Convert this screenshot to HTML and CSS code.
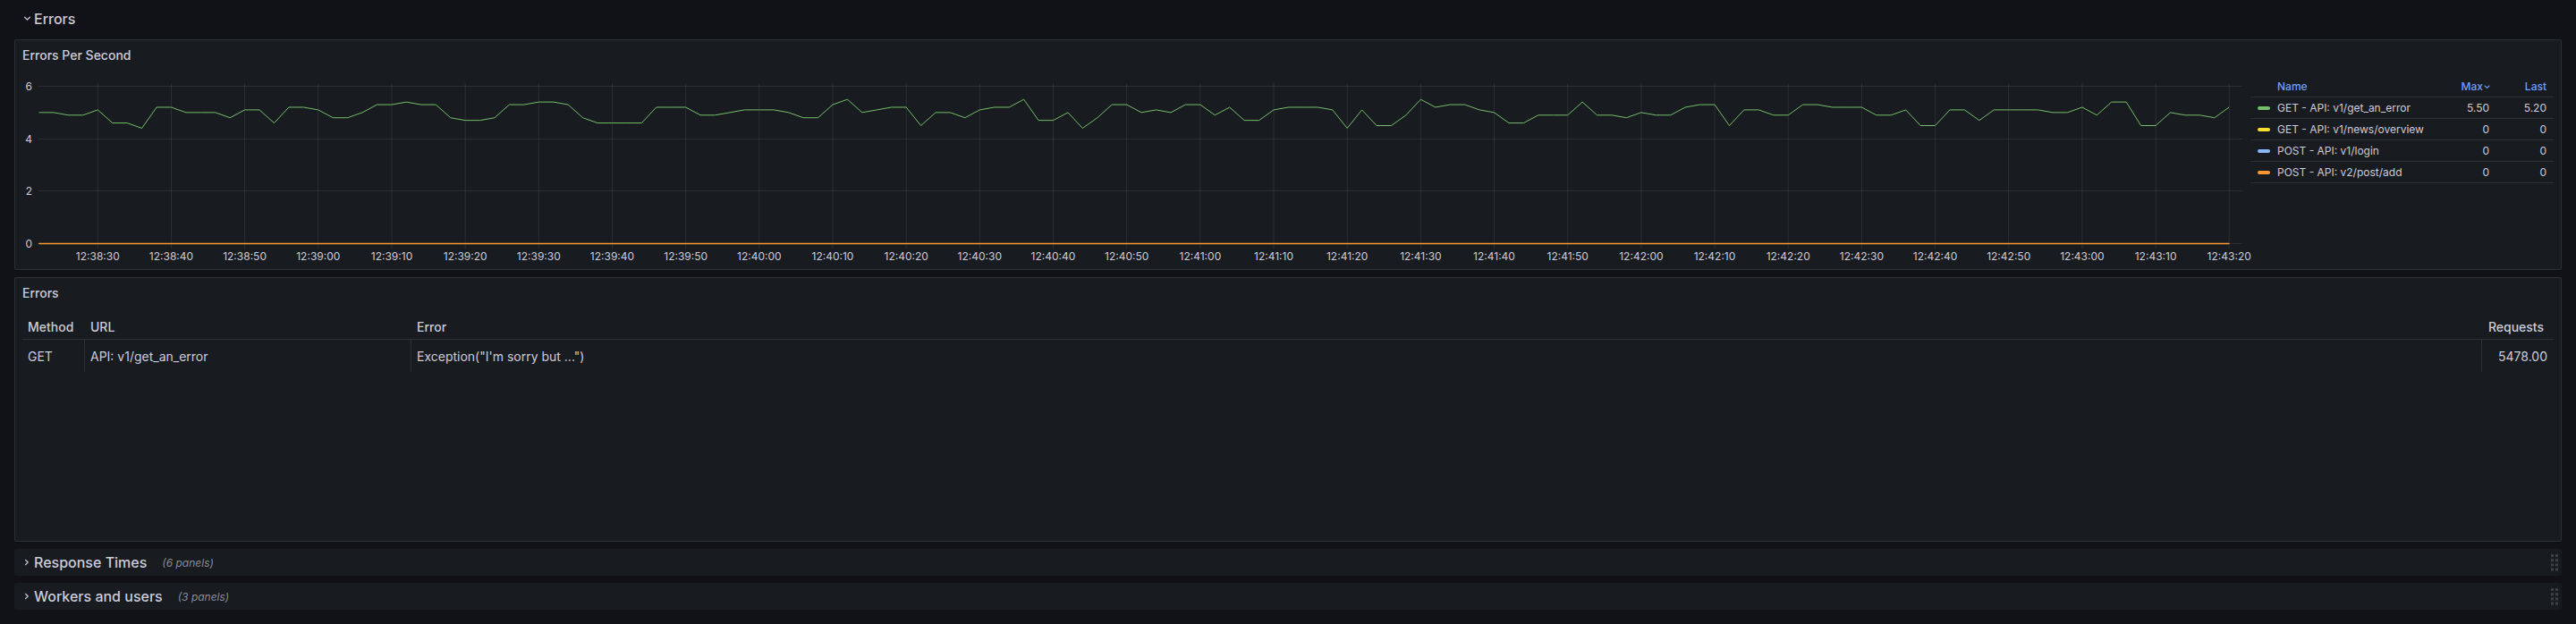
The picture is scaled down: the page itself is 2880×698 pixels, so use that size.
FILE: index.html
```html
<!DOCTYPE html>
<html lang="en">
<head>
<meta charset="utf-8">
<title>Errors</title>
<link rel="stylesheet" href="styles.css">
</head>
<body>
<div class="dashboard">
  <div class="row-header">
    <svg class="chev" width="8" height="8" viewBox="0 0 8 8"><polyline points="0.7,2.3 3.5,5.1 6.3,2.3" fill="none" stroke="#ccccdc" stroke-width="1.3" stroke-linecap="round" stroke-linejoin="round"/></svg>
    <span class="row-title">Errors</span>
  </div>

  <section class="panel panel-ts">
    <header class="panel-header">Errors Per Second</header>
    <div class="panel-body">
      <svg class="chart" height="208" overflow="visible">
        <path class="grid" d="M84.3 8V193M166.5 8V193M248.6 8V193M330.8 8V193M413 8V193M495.2 8V193M577.3 8V193M659.5 8V193M741.7 8V193M823.8 8V193M906 8V193M988.2 8V193M1070.3 8V193M1152.5 8V193M1234.7 8V193M1316.9 8V193M1399 8V193M1481.2 8V193M1563.4 8V193M1645.5 8V193M1727.7 8V193M1809.9 8V193M1892 8V193M1974.2 8V193M2056.4 8V193M2138.6 8V193M2220.7 8V193M2302.9 8V193M2385.1 8V193M2467.2 8V193M17.7 11.5H2482M17.7 70.5H2482M17.7 128.5H2482M17.7 187.5H2482"/>
        <g class="ylab">
          <text x="11" y="15.8">6</text>
          <text x="11" y="74.8">4</text>
          <text x="11" y="132.8">2</text>
          <text x="11" y="191.8">0</text>
        </g>
        <g class="xlab">
          <text x="84.3" y="206">12:38:30</text>
          <text x="166.5" y="206">12:38:40</text>
          <text x="248.6" y="206">12:38:50</text>
          <text x="330.8" y="206">12:39:00</text>
          <text x="413" y="206">12:39:10</text>
          <text x="495.2" y="206">12:39:20</text>
          <text x="577.3" y="206">12:39:30</text>
          <text x="659.5" y="206">12:39:40</text>
          <text x="741.7" y="206">12:39:50</text>
          <text x="823.8" y="206">12:40:00</text>
          <text x="906" y="206">12:40:10</text>
          <text x="988.2" y="206">12:40:20</text>
          <text x="1070.3" y="206">12:40:30</text>
          <text x="1152.5" y="206">12:40:40</text>
          <text x="1234.7" y="206">12:40:50</text>
          <text x="1316.9" y="206">12:41:00</text>
          <text x="1399" y="206">12:41:10</text>
          <text x="1481.2" y="206">12:41:20</text>
          <text x="1563.4" y="206">12:41:30</text>
          <text x="1645.5" y="206">12:41:40</text>
          <text x="1727.7" y="206">12:41:50</text>
          <text x="1809.9" y="206">12:42:00</text>
          <text x="1892" y="206">12:42:10</text>
          <text x="1974.2" y="206">12:42:20</text>
          <text x="2056.4" y="206">12:42:30</text>
          <text x="2138.6" y="206">12:42:40</text>
          <text x="2220.7" y="206">12:42:50</text>
          <text x="2302.9" y="206">12:43:00</text>
          <text x="2385.1" y="206">12:43:10</text>
          <text x="2467.2" y="206">12:43:20</text>
        </g>
        <g transform="translate(18.56 187.5) scale(16.434 -29.33)">
          <polyline class="s-green" points="0,5 1,5 2,4.9 3,4.9 4,5.1 5,4.6 6,4.6 7,4.4 8,5.2 9,5.2 10,5 11,5 12,5 13,4.8 14,5.1 15,5.1 16,4.6 17,5.2 18,5.2 19,5.1 20,4.8 21,4.8 22,5 23,5.3 24,5.3 25,5.4 26,5.3 27,5.3 28,4.8 29,4.7 30,4.7 31,4.8 32,5.3 33,5.3 34,5.4 35,5.4 36,5.3 37,4.8 38,4.6 39,4.6 40,4.6 41,4.6 42,5.2 43,5.2 44,5.2 45,4.9 46,4.9 47,5 48,5.1 49,5.1 50,5.1 51,5 52,4.8 53,4.8 54,5.3 55,5.5 56,5 57,5.1 58,5.2 59,5.2 60,4.5 61,5 62,5 63,4.8 64,5.1 65,5.2 66,5.2 67,5.5 68,4.7 69,4.7 70,5 71,4.4 72,4.8 73,5.3 74,5.3 75,5 76,5.1 77,5 78,5.3 79,5.3 80,4.9 81,5.2 82,4.7 83,4.7 84,5.1 85,5.2 86,5.2 87,5.2 88,5.1 89,4.4 90,5.1 91,4.5 92,4.5 93,4.9 94,5.5 95,5.2 96,5.3 97,5.3 98,5.1 99,5 100,4.6 101,4.6 102,4.9 103,4.9 104,4.9 105,5.4 106,4.9 107,4.9 108,4.8 109,5 110,4.9 111,4.9 112,5.2 113,5.3 114,5.3 115,4.5 116,5.1 117,5.1 118,4.9 119,4.9 120,5.3 121,5.3 122,5.2 123,5.2 124,5.2 125,4.9 126,4.9 127,5.1 128,4.5 129,4.5 130,5.1 131,5.1 132,4.7 133,5.1 134,5.1 135,5.1 136,5.1 137,5 138,5 139,5.2 140,4.9 141,5.4 142,5.4 143,4.5 144,4.5 145,5 146,4.9 147,4.9 148,4.8 149,5.2"/>
          <polyline class="s-yellow" points="0,0 149,0"/>
          <polyline class="s-blue" points="0,0 149,0"/>
          <polyline class="s-orange" points="0,0 149,0"/>
        </g>
      </svg>

      <div class="legend">
        <div class="lg-row lg-head">
          <div class="lg-name">Name</div>
          <div class="lg-num">Max<svg class="sort" width="7" height="6" viewBox="0 0 7 6"><polyline points="1,2 3.5,4.3 6,2" fill="none" stroke="#6e9fff" stroke-width="1.1" stroke-linecap="round" stroke-linejoin="round"/></svg></div>
          <div class="lg-num">Last</div>
        </div>
        <div class="lg-row">
          <div class="lg-series"><span class="swatch c-green"></span>GET - API: v1/get_an_error</div>
          <div class="lg-num">5.50</div>
          <div class="lg-num">5.20</div>
        </div>
        <div class="lg-row">
          <div class="lg-series"><span class="swatch c-yellow"></span>GET - API: v1/news/overview</div>
          <div class="lg-num">0</div>
          <div class="lg-num">0</div>
        </div>
        <div class="lg-row">
          <div class="lg-series"><span class="swatch c-blue"></span>POST - API: v1/login</div>
          <div class="lg-num">0</div>
          <div class="lg-num">0</div>
        </div>
        <div class="lg-row">
          <div class="lg-series"><span class="swatch c-orange"></span>POST - API: v2/post/add</div>
          <div class="lg-num">0</div>
          <div class="lg-num">0</div>
        </div>
      </div>
    </div>
  </section>

  <section class="panel panel-table">
    <header class="panel-header">Errors</header>
    <div class="panel-body table-body">
      <div class="tbl">
        <div class="th-row">
          <div class="th">Method</div>
          <div class="th">URL</div>
          <div class="th">Error</div>
          <div class="th th-right">Requests</div>
        </div>
        <div class="td-row">
          <div class="td">GET</div>
          <div class="td">API: v1/get_an_error</div>
          <div class="td">Exception("I'm sorry but ...")</div>
          <div class="td td-right">5478.00</div>
        </div>
      </div>
    </div>
  </section>

  <div class="row-header collapsed">
    <svg class="chev" width="8" height="8" viewBox="0 0 8 8"><polyline points="1.6,1.4 4.2,4 1.6,6.6" fill="none" stroke="#ccccdc" stroke-width="1.3" stroke-linecap="round" stroke-linejoin="round"/></svg>
    <span class="row-title">Response Times</span>
    <span class="row-count">(6 panels)</span>
    <svg class="drag" width="8" height="19" viewBox="0 0 8 19"><g fill="#3f4147"><rect x="0" y="0" width="3" height="3"/><rect x="5" y="0" width="3" height="3"/><rect x="0" y="5.2" width="3" height="3"/><rect x="5" y="5.2" width="3" height="3"/><rect x="0" y="10.4" width="3" height="3"/><rect x="5" y="10.4" width="3" height="3"/><rect x="0" y="15.6" width="3" height="3"/><rect x="5" y="15.6" width="3" height="3"/></g></svg>
  </div>

  <div class="row-header collapsed">
    <svg class="chev" width="8" height="8" viewBox="0 0 8 8"><polyline points="1.6,1.4 4.2,4 1.6,6.6" fill="none" stroke="#ccccdc" stroke-width="1.3" stroke-linecap="round" stroke-linejoin="round"/></svg>
    <span class="row-title">Workers and users</span>
    <span class="row-count">(3 panels)</span>
    <svg class="drag" width="8" height="19" viewBox="0 0 8 19"><g fill="#3f4147"><rect x="0" y="0" width="3" height="3"/><rect x="5" y="0" width="3" height="3"/><rect x="0" y="5.2" width="3" height="3"/><rect x="5" y="5.2" width="3" height="3"/><rect x="0" y="10.4" width="3" height="3"/><rect x="5" y="10.4" width="3" height="3"/><rect x="0" y="15.6" width="3" height="3"/><rect x="5" y="15.6" width="3" height="3"/></g></svg>
  </div>
</div>
</body>
</html>
```
FILE: styles.css
```css
html, body {
  margin: 0;
  padding: 0;
}

body {
  background: #111217;
  color: #ccccdc;
  font-family: Inter, "Liberation Sans", Arial, sans-serif;
  height: 698px;
  overflow: hidden;
}

.dashboard {
  display: flex;
  flex-direction: column;
  gap: 8px;
  padding: 6px 16px 0;
}

/* Rows */
.row-header {
  height: 30px;
  display: flex;
  align-items: center;
  padding-left: 11px;
  padding-right: 4px;
  font-size: 16px;
  font-weight: 500;
  border-radius: 2px;
}

.row-header.collapsed {
  background: #181b1f;
}

.chev {
  flex: none;
  margin-right: 3px;
}

.row-title {
  line-height: 1;
}

.row-count {
  padding-left: 17px;
  font-size: 12px;
  font-style: italic;
  font-weight: 400;
  color: rgba(204, 204, 220, 0.65);
}

.drag {
  margin-left: auto;
  flex: none;
}

/* Panels */
.panel {
  background: #181b1f;
  border: 1px solid rgba(204, 204, 220, 0.12);
  border-radius: 2px;
  display: flex;
  flex-direction: column;
  box-sizing: border-box;
}

.panel-ts {
  height: 258px;
}

.panel-table {
  height: 296px;
}

.panel-header {
  height: 32px;
  flex: none;
  display: flex;
  align-items: center;
  padding-left: 8px;
  font-size: 14px;
  font-weight: 500;
}

.panel-body {
  flex: 1;
  min-height: 0;
  padding: 8px;
  display: flex;
  gap: 8px;
}

/* Chart */
.chart {
  flex: 1;
  min-width: 0;
  display: block;
  overflow: visible;
}

.grid {
  fill: none;
  stroke: rgba(240, 250, 255, 0.09);
  stroke-width: 1;
}

.ylab text {
  fill: #ccccdc;
  font-size: 12px;
  text-anchor: end;
}

.xlab text {
  fill: #ccccdc;
  font-size: 12px;
  text-anchor: middle;
}

.chart polyline {
  fill: none;
  stroke-width: 1;
  stroke-linejoin: round;
  vector-effect: non-scaling-stroke;
}

.s-green { stroke: #73bf69; }
.s-yellow { stroke: #fade2a; }
.s-blue { stroke: #8ab8ff; }
.s-orange { stroke: #ff9830; stroke-width: 1.4 !important; }

/* Legend */
.legend {
  width: 339px;
  flex: none;
  align-self: flex-start;
  font-size: 12px;
}

.lg-row {
  display: grid;
  grid-template-columns: 1fr 64px 64px;
  height: 23px;
  align-items: center;
  border-bottom: 1px solid rgba(204, 204, 220, 0.12);
}

.lg-head {
  color: #6e9fff;
  font-weight: 500;
}

.lg-name {
  padding-left: 30px;
}

.lg-series {
  padding-left: 8px;
  display: flex;
  align-items: center;
  white-space: nowrap;
}

.lg-num {
  padding-right: 8px;
  text-align: right;
  display: flex;
  justify-content: flex-end;
  align-items: center;
}

.sort {
  margin-left: 1px;
  margin-right: -1px;
}

.swatch {
  display: inline-block;
  width: 14px;
  height: 4px;
  border-radius: 2px;
  margin-right: 8px;
  flex: none;
}

.c-green { background: #73bf69; }
.c-yellow { background: #fade2a; }
.c-blue { background: #8ab8ff; }
.c-orange { background: #ff9830; }

/* Table */
.table-body {
  display: block;
}

.tbl {
  font-size: 14px;
}

.th-row,
.td-row {
  display: grid;
  grid-template-columns: 70px 365px 1fr 80px;
}

.th-row {
  height: 28px;
  border-bottom: 1px solid rgba(204, 204, 220, 0.12);
  font-weight: 500;
}

.th {
  display: flex;
  align-items: center;
  padding: 0 6px;
}

.th-right {
  justify-content: flex-end;
  padding-right: 11px;
}

.td-row {
  height: 36px;
}

.td {
  display: flex;
  align-items: center;
  padding: 0 6px;
  border-right: 1px solid rgba(204, 204, 220, 0.12);
  white-space: nowrap;
}

.td-right {
  justify-content: flex-end;
  padding-right: 7px;
  border-right: none;
}
```
